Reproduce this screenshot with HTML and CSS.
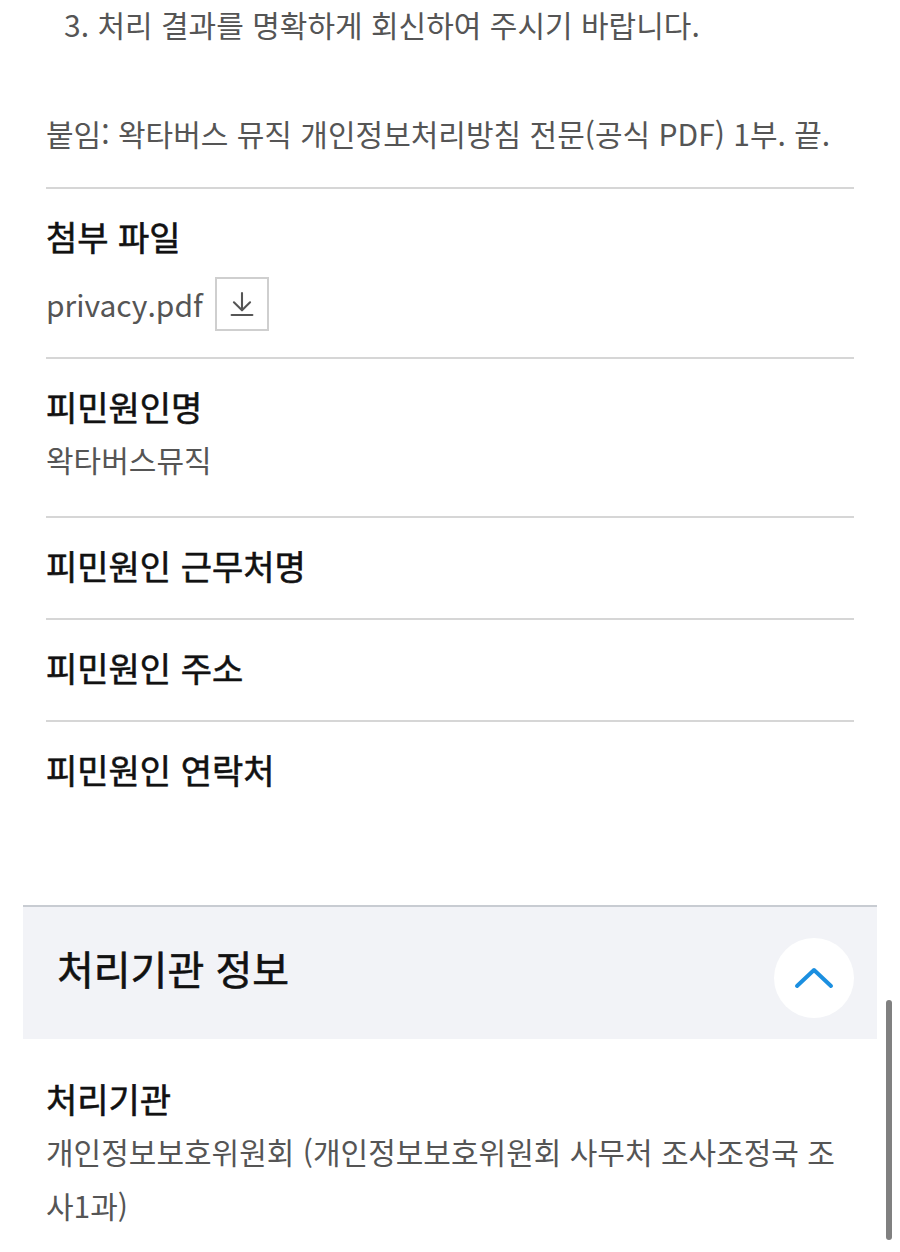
FILE: index.html
```html
<!DOCTYPE html>
<html lang="ko">
<head>
<meta charset="utf-8">
<link rel="stylesheet" href="styles.css">
</head>
<body>
<div class="page">
  <div class="content">
    <p class="text item">3. 처리 결과를 명확하게 회신하여 주시기 바랍니다.</p>
    <p class="text attach">붙임: 왁타버스 뮤직 개인정보처리방침 전문(공식 PDF) 1부. 끝.</p>

    <div class="row row-file">
      <h3 class="label">첨부 파일</h3>
      <div class="file">
        <span class="text">privacy.pdf</span>
        <span class="dl">
          <svg width="30" height="30" viewBox="0 0 26 26" fill="none" stroke="#555" stroke-width="1.8" stroke-linecap="round" stroke-linejoin="round">
            <path d="M13 3.5 V18"/>
            <path d="M6 11.5 L13 18.5 L20 11.5"/>
            <path d="M4 22.5 H22"/>
          </svg>
        </span>
      </div>
    </div>

    <div class="row">
      <h3 class="label">피민원인명</h3>
      <p class="text value">왁타버스뮤직</p>
    </div>

    <div class="row">
      <h3 class="label">피민원인 근무처명</h3>
    </div>

    <div class="row">
      <h3 class="label">피민원인 주소</h3>
    </div>

    <div class="row last">
      <h3 class="label">피민원인 연락처</h3>
    </div>
  </div>

  <div class="section-head">
    <h2 class="section-title">처리기관 정보</h2>
    <button class="toggle" type="button" aria-label="접기">
      <svg width="40" height="24" viewBox="0 0 40 24" fill="none" stroke="#1b8fe0" stroke-width="4" stroke-linecap="round" stroke-linejoin="round">
        <path d="M3 20 L20 4 L37 20"/>
      </svg>
    </button>
  </div>

  <div class="content">
    <div class="row plain">
      <h3 class="label">처리기관</h3>
      <p class="text value">개인정보보호위원회 (개인정보보호위원회 사무처 조사조정국 조사1과)</p>
    </div>
  </div>

  <div class="scrollbar"></div>
</div>
</body>
</html>
```

FILE: styles.css
```css
html, body {
  margin: 0;
  padding: 0;
  background: #ffffff;
}

body {
  font-family: "Noto Sans CJK KR", "Noto Sans", sans-serif;
  width: 900px;
  height: 1252px;
  overflow: hidden;
}

.page {
  position: relative;
  height: 1252px;
}

.content {
  padding: 0 46px;
}

.text {
  margin: 0;
  font-size: 30px;
  line-height: 54px;
  color: #555555;
  font-weight: 400;
}

.item {
  padding-left: 18px;
  line-height: 48px;
}

.attach {
  margin-top: 58px;
  padding-bottom: 27px;
}

.row {
  border-top: 2px solid #d6d6d6;
  padding: 26px 0 30px;
}

.row.row-file {
  padding-bottom: 26px;
}

.row.last {
  padding-bottom: 0;
}

.row.plain {
  border-top: none;
  padding-top: 38px;
}

.label {
  margin: 0;
  font-size: 34px;
  line-height: 44px;
  font-weight: 400;
  color: #111111;
  -webkit-text-stroke: 0.6px #111111;
}

.value {
  margin-top: 3px;
}

.file {
  display: flex;
  align-items: center;
  gap: 12px;
  margin-top: 18px;
  height: 54px;
}

.dl {
  width: 50px;
  height: 50px;
  border: 2px solid #cfcfcf;
  display: flex;
  align-items: center;
  justify-content: center;
}

.section-head {
  margin: 113px 23px 0;
  border-top: 2px solid #c8ccd2;
  background: #f2f3f7;
  height: 132px;
  display: flex;
  align-items: center;
  justify-content: space-between;
  padding: 0 23px 0 34px;
}

.section-title {
  margin: 0 0 10px;
  font-size: 40px;
  line-height: 48px;
  font-weight: 400;
  color: #111111;
  -webkit-text-stroke: 0.6px #111111;
}

.toggle {
  width: 80px;
  height: 80px;
  border-radius: 50%;
  border: none;
  background: #ffffff;
  display: flex;
  align-items: center;
  justify-content: center;
  padding: 0;
  margin-top: 10px;
}

.scrollbar {
  position: absolute;
  left: 886px;
  top: 1000px;
  width: 6px;
  height: 240px;
  border-radius: 3px;
  background: #808080;
}
```
